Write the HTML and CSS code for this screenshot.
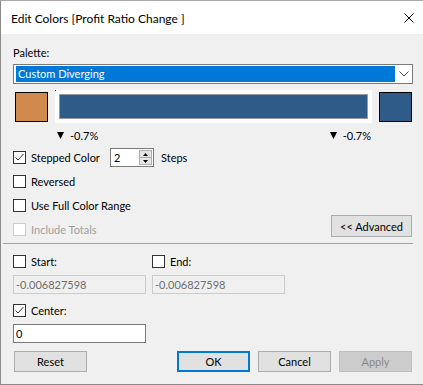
FILE: index.html
```html
<!DOCTYPE html>
<html>
<head>
  <title>Edit Colors</title>
  <link rel="stylesheet" href="styles.css">
</head>
<body>
  <div class="dialog">
    <div class="titlebar">
      <span class="title">Edit Colors [Profit Ratio Change ]</span>
      <svg class="close" width="10" height="10" viewBox="0 0 10 10">
        <path d="M0.5 0.5 L9.5 9.5 M9.5 0.5 L0.5 9.5" stroke="#000" stroke-width="1" fill="none"/>
      </svg>
    </div>

    <div class="content">
      <div class="field-label">Palette:</div>
      <div class="select">
        <span class="select-value">Custom Diverging</span>
        <svg class="chevron" width="10" height="6" viewBox="0 0 10 6">
          <path d="M0.5 0.5 L5 5 L9.5 0.5" stroke="#444" stroke-width="1" fill="none"/>
        </svg>
      </div>

      <div class="ramp">
        <div class="swatch swatch-start"></div>
        <div class="ramp-frame"><div class="ramp-bar"></div></div>
        <div class="swatch swatch-end"></div>
      </div>

      <div class="ramp-labels">
        <span class="marker">
          <svg width="7" height="7" viewBox="0 0 7 7"><polygon points="0,0 7,0 3.5,7" fill="#000"/></svg>
          -0.7%
        </span>
        <span class="marker">
          <svg width="7" height="7" viewBox="0 0 7 7"><polygon points="0,0 7,0 3.5,7" fill="#000"/></svg>
          -0.7%
        </span>
      </div>

      <div class="stepped-row">
        <label class="check stepped-check">
          <span class="box">
            <svg width="11" height="11" viewBox="0 0 11 11"><path d="M1.5 5.5 L4 8 L9.5 2" stroke="#333" stroke-width="1" fill="none"/></svg>
          </span>
          Stepped Color
        </label>
        <div class="spinner">
          <span class="spinner-value">2</span>
          <div class="spin-buttons">
            <span class="spin-btn"><svg width="5" height="3" viewBox="0 0 5 3"><polygon points="0,3 5,3 2.5,0" fill="#000"/></svg></span>
            <span class="spin-btn"><svg width="5" height="3" viewBox="0 0 5 3"><polygon points="0,0 5,0 2.5,3" fill="#000"/></svg></span>
          </div>
        </div>
        <span class="steps-label">Steps</span>
      </div>

      <label class="check option reversed"><span class="box"></span>Reversed</label>
      <label class="check option full-range"><span class="box"></span>Use Full Color Range</label>

      <div class="totals-row">
        <label class="check disabled"><span class="box"></span>Include Totals</label>
        <button type="button" class="btn advanced">&lt;&lt; Advanced</button>
      </div>

      <div class="separator"></div>

      <div class="range-grid">
        <label class="check"><span class="box"></span>Start:</label>
        <label class="check"><span class="box"></span>End:</label>
        <div class="text-input disabled">-0.006827598</div>
        <div class="text-input disabled">-0.006827598</div>
      </div>

      <label class="check center-check">
        <span class="box">
          <svg width="11" height="11" viewBox="0 0 11 11"><path d="M1.5 5.5 L4 8 L9.5 2" stroke="#333" stroke-width="1" fill="none"/></svg>
        </span>
        Center:
      </label>
      <div class="text-input center-input">0</div>

      <div class="button-row">
        <button type="button" class="btn reset">Reset</button>
        <div class="button-group">
          <button type="button" class="btn btn-default">OK</button>
          <button type="button" class="btn">Cancel</button>
          <button type="button" class="btn btn-disabled">Apply</button>
        </div>
      </div>
    </div>
  </div>
</body>
</html>
```

FILE: styles.css
```css
/* Dialog styles */
body {
  margin: 0;
  font-family: "Segoe UI", Lato, "Liberation Sans", sans-serif;
  font-size: 11px;
  color: #000;
  background-color: #F0F0F0;
}

.dialog {
  width: 423px;
  height: 385px;
  box-sizing: border-box;
  border-top: 1px solid #A8A8A8;
  border-left: 1px solid #8A8A8A;
  border-bottom: 1px solid #8A8A8A;
  background-color: #F0F0F0;
}

.titlebar {
  height: 33px;
  background-color: #FFFFFF;
  display: flex;
  align-items: center;
  justify-content: space-between;
  padding: 1px 9px 0 10px;
  box-sizing: border-box;
}

.title {
  font-size: 12px;
  line-height: 15px;
}

.content {
  padding: 0 10px 0 12px;
  line-height: 15px;
}

.field-label {
  margin-top: 11px;
  height: 15px;
}

.select {
  margin-top: 4px;
  height: 20px;
  box-sizing: border-box;
  border: 1px solid #7A7A7A;
  background-color: #FFFFFF;
  display: flex;
  align-items: center;
  padding: 1px 0 1px 2px;
}

.select-value {
  width: 379px;
  height: 16px;
  line-height: 16px;
  padding-left: 2px;
  box-sizing: border-box;
  background-color: #0078D7;
  color: #FFFFFF;
}

.chevron {
  margin-left: 4px;
}

.ramp {
  margin-top: 6px;
  height: 33px;
  display: flex;
  align-items: center;
  gap: 7px;
  padding-left: 2px;
}

.swatch {
  width: 33px;
  height: 30px;
  box-sizing: border-box;
  border: 1px solid #000;
}

.swatch-start {
  background-color: #D08A4E;
}

.swatch-end {
  background-color: #2E5B88;
}

.ramp-frame {
  position: relative;
  width: 317px;
  height: 33px;
  box-sizing: border-box;
  padding: 4px;
  background-color: #FFFFFF;
}

.ramp-frame::before {
  content: "";
  position: absolute;
  left: 0;
  top: 0;
  width: 1px;
  height: 1px;
  background-color: #000;
}

.ramp-bar {
  height: 25px;
  box-sizing: border-box;
  border: 1px solid #9A9A9A;
  background-color: #2E5B88;
}

.ramp-labels {
  margin: 5px 0 0 44px;
  width: 314px;
  height: 15px;
  display: flex;
  justify-content: space-between;
}

.marker {
  display: flex;
  align-items: center;
  gap: 6px;
}

.check {
  display: flex;
  align-items: center;
  height: 15px;
  gap: 5px;
}

.box {
  width: 13px;
  height: 13px;
  box-sizing: border-box;
  border: 1px solid #333;
  background-color: #FFFFFF;
  display: flex;
  align-items: center;
  justify-content: center;
}

.check.disabled {
  color: #A0A0A0;
}

.check.disabled .box {
  border-color: #CCCCCC;
}

.stepped-row {
  margin-top: 5px;
  height: 19px;
  display: flex;
  align-items: center;
}

.stepped-check {
  width: 97px;
}

.spinner {
  width: 44px;
  height: 19px;
  box-sizing: border-box;
  border: 1px solid #7A7A7A;
  background-color: #FFFFFF;
  display: flex;
  justify-content: space-between;
  padding: 1px;
}

.spinner-value {
  padding-left: 2px;
  line-height: 15px;
}

.spin-buttons {
  width: 13px;
  display: flex;
  flex-direction: column;
  border: 1px solid #ADADAD;
  box-sizing: border-box;
  background-color: #E5E5E5;
}

.spin-btn {
  flex: 1;
  display: flex;
  align-items: center;
  justify-content: center;
}

.spin-btn + .spin-btn {
  border-top: 1px solid #ADADAD;
}

.steps-label {
  margin-left: 7px;
}

.reversed {
  margin-top: 7px;
}

.full-range {
  margin-top: 9px;
}

.totals-row {
  margin-top: 2px;
  height: 22px;
  display: flex;
  justify-content: space-between;
  align-items: flex-end;
}

.btn {
  font-family: inherit;
  font-size: 11px;
  color: #000;
  height: 21px;
  width: 73px;
  padding: 0;
  box-sizing: border-box;
  border: 1px solid #ADADAD;
  background-color: #E1E1E1;
}

.advanced {
  width: 81px;
  height: 22px;
  margin-right: 1px;
  align-self: center;
}

.separator {
  margin: 6px 0 0 -10px;
  height: 1px;
  background-color: #A0A0A0;
}

.range-grid {
  margin-top: 10px;
  display: grid;
  grid-template-columns: 133px 133px;
  column-gap: 6px;
  row-gap: 6px;
}

.text-input {
  height: 19px;
  box-sizing: border-box;
  border: 1px solid #7A7A7A;
  background-color: #FFFFFF;
  padding-left: 2px;
  line-height: 17px;
}

.text-input.disabled {
  border-color: #CCCCCC;
  background-color: #F0F0F0;
  color: #6D6D6D;
}

.center-check {
  margin-top: 9px;
}

.center-input {
  margin-top: 6px;
  width: 133px;
}

.button-row {
  margin-top: 8px;
  display: flex;
  justify-content: space-between;
  padding: 0 1px 0 1px;
}

.button-group {
  display: flex;
  gap: 8px;
}

.btn-default {
  border: 2px solid #0078D7;
}

.btn-disabled {
  background-color: #CCCCCC;
  border-color: #BFBFBF;
  color: #8A8A8A;
}
```
